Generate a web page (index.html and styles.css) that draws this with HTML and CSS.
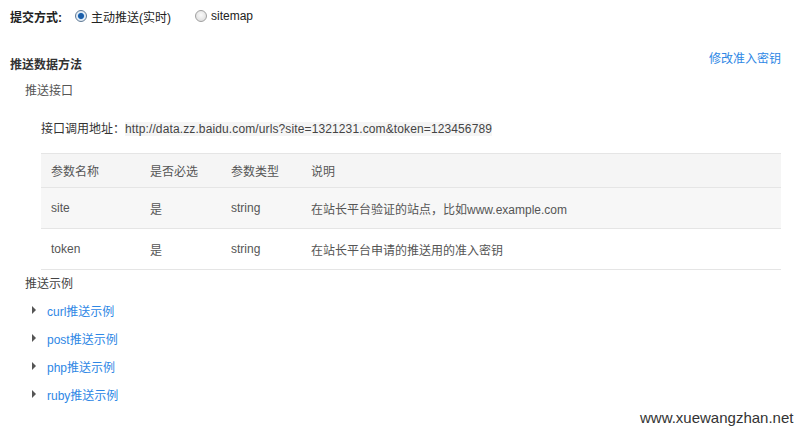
FILE: index.html
```html
<!DOCTYPE html>
<html>
<head>
<meta charset="utf-8">
<link rel="stylesheet" href="styles.css">
</head>
<body>
<div class="page">
  <div class="mode">
    <span class="mode-label">提交方式:</span>
    <label class="opt"><span class="radio checked"></span>主动推送(实时)</label>
    <label class="opt opt2"><span class="radio"></span>sitemap</label>
  </div>
  <div class="section-head">
    <span class="section-title">推送数据方法</span>
    <a class="link key-link">修改准入密钥</a>
  </div>
  <div class="sub-title">推送接口</div>
  <div class="api">接口调用地址：<span class="url">http://data.zz.baidu.com/urls?site=1321231.com&amp;token=123456789</span></div>
  <div class="table">
    <div class="row head">
      <span class="c1">参数名称</span><span class="c2">是否必选</span><span class="c3">参数类型</span><span class="c4">说明</span>
    </div>
    <div class="row shade">
      <span class="c1">site</span><span class="c2">是</span><span class="c3">string</span><span class="c4">在站长平台验证的站点，比如www.example.com</span>
    </div>
    <div class="row">
      <span class="c1">token</span><span class="c2">是</span><span class="c3">string</span><span class="c4">在站长平台申请的推送用的准入密钥</span>
    </div>
  </div>
  <div class="sub-title ex-title">推送示例</div>
  <ul class="examples">
    <li><span class="tri"></span><a class="link">curl推送示例</a></li>
    <li><span class="tri"></span><a class="link">post推送示例</a></li>
    <li><span class="tri"></span><a class="link">php推送示例</a></li>
    <li><span class="tri"></span><a class="link">ruby推送示例</a></li>
  </ul>
  <div class="watermark">www.xuewangzhan.net</div>
</div>
</body>
</html>
```
FILE: styles.css
```css
html, body {
  margin: 0;
  padding: 0;
  background: #fff;
}
body {
  font-family: "Liberation Sans", "Noto Sans CJK SC", sans-serif;
  font-size: 12px;
  color: #333;
}
.page {
  width: 803px;
  height: 429px;
  position: relative;
  overflow: hidden;
}
.mode {
  display: flex;
  align-items: center;
  height: 16px;
  padding: 8px 0 0 10px;
}
.mode-label {
  font-weight: bold;
  color: #222;
  margin-right: 13px;
}
.opt {
  display: flex;
  align-items: center;
  color: #222;
}
.opt2 {
  margin-left: 24px;
}
.radio {
  width: 12px;
  height: 12px;
  border-radius: 50%;
  border: 1px solid #a0a0a0;
  box-sizing: border-box;
  background: radial-gradient(circle at 50% 40%, #fafafa, #d8d8d8);
  margin-right: 4px;
}
.radio.checked {
  border-color: #5f7a96;
  background: radial-gradient(circle, #1d5ea8 0 2.5px, #5a9ee0 3px, #e6eef6 3.6px, #dde4ec 100%);
}
.section-head {
  display: flex;
  justify-content: space-between;
  align-items: flex-start;
  padding: 25px 22px 0 10px;
  height: 26px;
}
.section-title {
  font-weight: bold;
  color: #333;
  margin-top: 6px;
}
.link {
  color: #2e87e5;
  text-decoration: none;
  cursor: pointer;
}
.sub-title {
  color: #555;
  padding-left: 25px;
  margin-top: 6px;
  height: 20px;
}
.api {
  padding-left: 41px;
  margin-top: 18px;
  color: #333;
  height: 20px;
}
.url {
  background: #f5f5f5;
  color: #444;
  letter-spacing: 0.12px;
}
.table {
  margin: 14px 22px 0 41px;
  border-top: 1px solid #e5e5e5;
}
.row {
  display: flex;
  align-items: center;
  height: 40px;
  border-bottom: 1px solid #e5e5e5;
  color: #555;
}
.row.head {
  height: 33px;
  background: #f5f5f5;
}
.row.shade {
  background: #f7f7f7;
}
.c1 { width: 99px; padding-left: 10px; }
.c2 { width: 81px; }
.c3 { width: 80px; }
.c4 { flex: 1; }
.ex-title {
  margin-top: 4px;
  color: #444;
}
.examples {
  list-style: none;
  margin: 2px 0 0 0;
  padding: 0 0 0 32px;
}
.examples li {
  display: flex;
  align-items: center;
  height: 28px;
}
.tri {
  width: 0;
  height: 0;
  border-top: 4px solid transparent;
  border-bottom: 4px solid transparent;
  border-left: 4px solid #555;
  margin-right: 11px;
}
.watermark {
  position: absolute;
  left: 640px;
  top: 409px;
  font-size: 15px;
  color: #333;
  font-family: "Liberation Sans", sans-serif;
}
```
